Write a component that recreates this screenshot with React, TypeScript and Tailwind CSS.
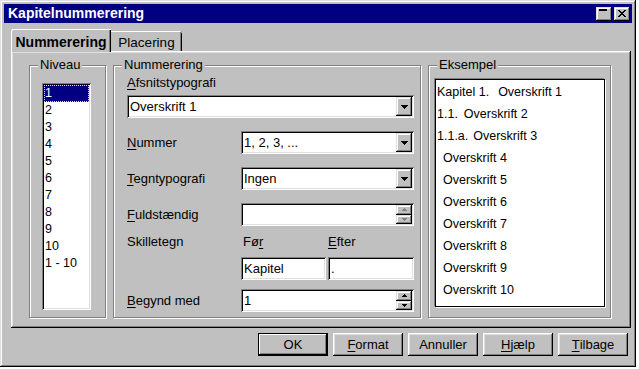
import React from "react";

const raised =
  "shadow-[inset_-1px_-1px_#000,inset_1px_1px_#fff,inset_-2px_-2px_#808080,inset_2px_2px_#dfdfdf]";
const raisedBtn =
  "shadow-[inset_-1px_-1px_#000,inset_1px_1px_#dfdfdf,inset_-2px_-2px_#808080,inset_2px_2px_#fff]";
const sunken =
  "shadow-[inset_1px_1px_#808080,inset_-1px_-1px_#fff,inset_2px_2px_#000,inset_-2px_-2px_#dfdfdf]";

function U({ children }: { children: React.ReactNode }) {
  return <span className="underline decoration-1 underline-offset-[2px]">{children}</span>;
}

function DownArrow({ color = "#000" }: { color?: string }) {
  return (
    <svg width="7" height="4" viewBox="0 0 7 4" shapeRendering="crispEdges">
      <path d="M0 0h7v1H0zM1 1h5v1H1zM2 2h3v1H2zM3 3h1v1H3z" fill={color} />
    </svg>
  );
}

function SmallArrow({ up, color = "#000" }: { up?: boolean; color?: string }) {
  return (
    <svg width="5" height="3" viewBox="0 0 5 3" shapeRendering="crispEdges">
      {up ? (
        <path d="M2 0h1v1H2zM1 1h3v1H1zM0 2h5v1H0z" fill={color} />
      ) : (
        <path d="M0 0h5v1H0zM1 1h3v1H1zM2 2h1v1H2z" fill={color} />
      )}
    </svg>
  );
}

function Select({ value, className = "" }: { value: string; className?: string }) {
  return (
    <div className={`flex h-[23px] items-stretch bg-white ${sunken} ${className}`}>
      <span className="flex-1 pl-[3px] leading-[23px]">{value}</span>
      <div className={`my-[2px] mr-[2px] flex w-[16px] items-center justify-center bg-[#c0c0c0] ${raisedBtn}`}>
        <DownArrow />
      </div>
    </div>
  );
}

function Spin({ value, disabled, className = "" }: { value: string; disabled?: boolean; className?: string }) {
  const c = disabled ? "#808080" : "#000";
  return (
    <div className={`flex h-[23px] items-stretch bg-white ${sunken} ${className}`}>
      <span className="flex-1 pl-[3px] leading-[23px]">{value}</span>
      <div className="my-[2px] mr-[2px] flex w-[16px] flex-col">
        <div className={`flex flex-1 items-center justify-center bg-[#c0c0c0] ${raisedBtn}`}>
          <SmallArrow up color={c} />
        </div>
        <div className={`flex flex-1 items-center justify-center bg-[#c0c0c0] ${raisedBtn}`}>
          <SmallArrow color={c} />
        </div>
      </div>
    </div>
  );
}

function Field({ value, className = "" }: { value: string; className?: string }) {
  return (
    <div className={`h-[23px] bg-white pl-[3px] leading-[23px] ${sunken} ${className}`}>{value}</div>
  );
}

function Group({
  label,
  className = "",
  children,
}: {
  label: string;
  className?: string;
  children: React.ReactNode;
}) {
  return (
    <div
      className={`relative border border-[#808080] shadow-[1px_1px_0_#fff,inset_1px_1px_0_#fff] ${className}`}
    >
      <span className="absolute left-[8px] top-[-9px] bg-[#c0c0c0] px-[2px] leading-[16px]">{label}</span>
      {children}
    </div>
  );
}

function Button({ children, def }: { children: React.ReactNode; def?: boolean }) {
  return (
    <div
      className={`flex h-[23px] w-[70px] items-center justify-center bg-[#c0c0c0] ${
        def
          ? "shadow-[inset_0_0_0_1px_#000,inset_-2px_-2px_#000,inset_2px_2px_#fff,inset_-3px_-3px_#808080]"
          : raised
      }`}
    >
      {children}
    </div>
  );
}

export default function App() {
  const levels = ["1", "2", "3", "4", "5", "6", "7", "8", "9", "10", "1 - 10"];
  return (
    <div
      className="h-[369px] w-[639px] bg-white text-[13px] text-black"
      style={{ fontFamily: '"Liberation Sans", Arial, sans-serif' }}
    >
      <div
        className={`flex h-[367px] w-[636px] flex-col bg-[#c0c0c0] p-[4px] shadow-[inset_-1px_-1px_#000,inset_1px_1px_#dfdfdf,inset_-2px_-2px_#808080,inset_2px_2px_#fff]`}
      >
        {/* Title bar */}
        <div className="flex h-[19px] items-center bg-[#000080] pl-[4px] pr-[2px]">
          <span className="flex-1 text-[14px] font-bold leading-[19px] text-white">Kapitelnummerering</span>
          <div className="flex gap-[2px]">
            <div className={`h-[14px] w-[16px] bg-[#c0c0c0] pl-[3px] pt-[2px] ${raisedBtn}`}>
              <div className="h-[2px] w-[8px] bg-black" />
            </div>
            <div className={`flex h-[14px] w-[16px] items-center justify-center bg-[#c0c0c0] ${raisedBtn}`}>
              <svg width="8" height="7" viewBox="0 0 8 7" shapeRendering="crispEdges">
                <path
                  d="M0 0h2v1H0zM6 0h2v1H6zM1 1h2v1H1zM5 1h2v1H5zM2 2h4v1H2zM3 3h2v1H3zM2 4h4v1H2zM1 5h2v1H1zM5 5h2v1H5zM0 6h2v1H0zM6 6h2v1H6z"
                  fill="#000"
                />
              </svg>
            </div>
          </div>
        </div>

        {/* Tabs */}
        <div className="mt-[6px] flex h-[22px] items-end pl-[7px]">
          <div className="relative z-10 -mb-[1px] flex h-[23px] w-[100px] items-start justify-center rounded-tl-[2px] bg-[#c0c0c0] pt-[3px] text-[14px] font-bold shadow-[inset_1px_1px_#fff,inset_-1px_0_#000,inset_-2px_0_#808080]">
            Nummerering
          </div>
          <div className="flex h-[20px] w-[71px] items-start justify-center rounded-tr-[2px] bg-[#c0c0c0] pt-[2px] text-[13.5px] shadow-[inset_0_1px_#fff,inset_-1px_0_#000,inset_-2px_0_#808080]">
            Placering
          </div>
        </div>

        {/* Panel */}
        <div className={`ml-[7px] mr-[1px] flex h-[277px] gap-[7px] bg-[#c0c0c0] pl-[18px] pt-[14px] ${raised}`}>
          <Group label="Niveau" className="h-[253px] w-[77px]">
            <div className={`ml-[12px] mt-[17px] h-[227px] w-[49px] bg-white p-[2px] text-[12.5px] ${sunken}`}>
              {levels.map((l, i) => (
                <div
                  key={l}
                  className={`h-[17px] pl-[1px] leading-[17px] ${
                    i === 0 ? "bg-[#000080] text-white outline-1 -outline-offset-1 outline-dotted outline-[#ffff00]" : ""
                  }`}
                >
                  {l}
                </div>
              ))}
            </div>
          </Group>

          <Group label="Nummerering" className="h-[253px] w-[308px]">
            <div className="flex flex-col pl-[13px] pr-[6px] pt-[10px]">
              <div className="h-[14px] leading-[14px]">
                <U>A</U>fsnitstypografi
              </div>
              <Select value="Overskrift 1" className="mt-[5px]" />
              <div className="mt-[13px] flex items-center">
                <span className="w-[114px]">
                  <U>N</U>ummer
                </span>
                <Select value="1, 2, 3, ..." className="flex-1" />
              </div>
              <div className="mt-[13px] flex items-center">
                <span className="w-[114px]">
                  <U>T</U>egntypografi
                </span>
                <Select value="Ingen" className="flex-1" />
              </div>
              <div className="mt-[13px] flex items-center">
                <span className="w-[114px]">
                  <U>F</U>uldstændig
                </span>
                <Spin value="" disabled className="flex-1" />
              </div>
              <div className="mt-[9px] flex h-[14px] items-center leading-[14px]">
                <span className="w-[116px]">Skilletegn</span>
                <span className="w-[85px]">
                  Fø<U>r</U>
                </span>
                <span>
                  <U>E</U>fter
                </span>
              </div>
              <div className="mt-[8px] flex gap-[2px] pl-[114px]">
                <Field value="Kapitel" className="w-[85px]" />
                <Field value="." className="flex-1" />
              </div>
              <div className="mt-[9px] flex items-center">
                <span className="w-[114px]">
                  <U>B</U>egynd med
                </span>
                <Spin value="1" className="flex-1" />
              </div>
            </div>
          </Group>

          <Group label="Eksempel" className="h-[253px] w-[183px]">
            <div className="ml-[6px] mt-[13px] h-[228px] w-[170px] border border-black bg-white pt-[1px] text-[12.5px] shadow-[-1px_-1px_0_#808080,1px_1px_0_#fff]">
              <div className="h-[22px] pl-[1px] leading-[22px]">
                Kapitel 1.<span className="ml-[9px]">Overskrift 1</span>
              </div>
              <div className="h-[22px] pl-[1px] leading-[22px]">
                1.1.<span className="ml-[6px]">Overskrift 2</span>
              </div>
              <div className="h-[22px] pl-[1px] leading-[22px]">
                1.1.a.<span className="ml-[5px]">Overskrift 3</span>
              </div>
              {[4, 5, 6, 7, 8, 9, 10].map((n) => (
                <div key={n} className="h-[22px] pl-[7px] leading-[22px]">
                  Overskrift {n}
                </div>
              ))}
            </div>
          </Group>
        </div>

        {/* Buttons */}
        <div className="mt-[5px] flex justify-end gap-[5px] pr-[4px]">
          <Button def>OK</Button>
          <Button>
            <U>F</U>ormat
          </Button>
          <Button>Annuller</Button>
          <Button>
            <U>H</U>jælp
          </Button>
          <Button>
            <U>T</U>ilbage
          </Button>
        </div>
      </div>
    </div>
  );
}
